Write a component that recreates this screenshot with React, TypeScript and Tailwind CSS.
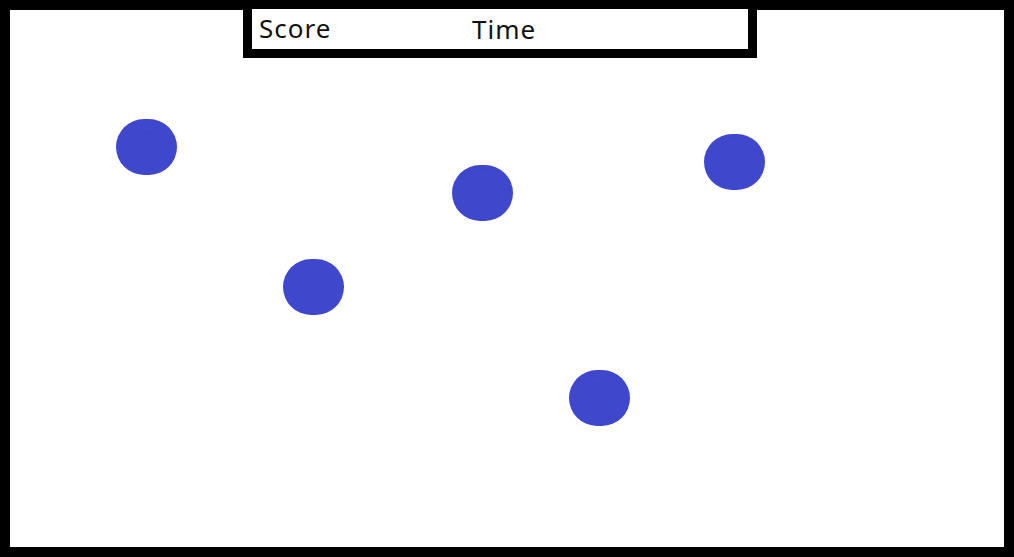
import React from "react";

const balls = [
  { x: 146, y: 147 },
  { x: 482, y: 193 },
  { x: 734, y: 162 },
  { x: 313, y: 287 },
  { x: 599, y: 398 },
];

export default function App() {
  return (
    <div className="relative w-[1014px] h-[557px] bg-white overflow-hidden">
      <div className="absolute inset-0 border-[10px] border-black" />
      <div
        className="absolute left-[243px] top-0 w-[514px] h-[58px] border-[9px] border-black bg-white"
        style={{ fontFamily: '"Noto Sans", "Open Sans", sans-serif' }}
      >
        <span className="absolute left-[7px] top-[1px] text-[26px] leading-[36px] tracking-[1px] text-[#111]">Score</span>
        <span className="absolute left-[220px] top-[2px] text-[26px] leading-[36px] tracking-[1px] text-[#111]">Time</span>
      </div>
      {balls.map((b, i) => (
        <div
          key={i}
          className="absolute w-[61px] h-[56px] rounded-full bg-[#3f48cc] flex items-center justify-center"
          style={{ left: b.x - 30.5, top: b.y - 28 }}
        >
          <div className="w-[43px] h-[38px] rounded-full border border-dashed border-[#444cd0]" />
        </div>
      ))}
    </div>
  );
}
